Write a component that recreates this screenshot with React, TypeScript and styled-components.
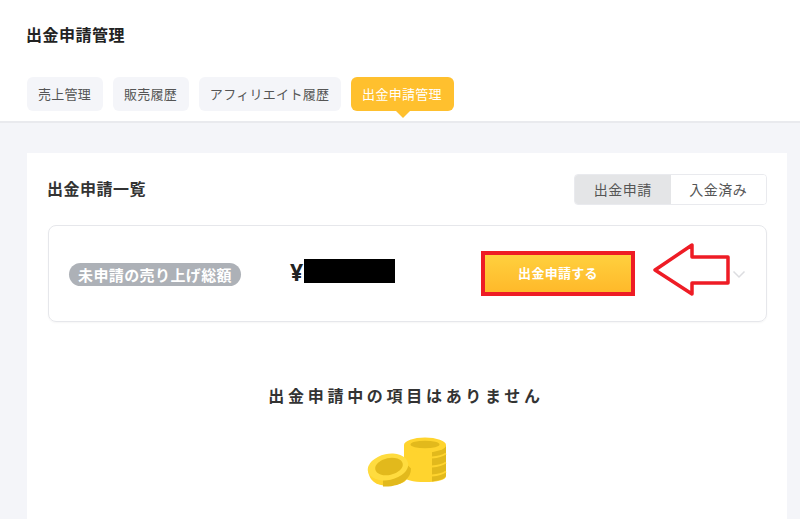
import styled, { createGlobalStyle } from 'styled-components';

const GlobalStyle = createGlobalStyle`
  html, body {
    margin: 0;
    padding: 0;
    height: 519px;
    overflow: hidden;
    background: #f4f5f9;
    font-family: "Noto Sans CJK JP", "Noto Sans", sans-serif;
    color: #333;
  }
  * {
    box-sizing: border-box;
  }
`;

const Page = styled.div`
  position: relative;
  width: 800px;
  height: 519px;
  overflow: hidden;
`;

const Header = styled.header`
  height: 123px;
  padding: 22px 27px 0;
  background: #fff;
  border-bottom: 2px solid #e9eaee;
`;

const PageTitle = styled.h1`
  margin: 0 0 31px -1px;
  height: 24px;
  font-size: 16px;
  line-height: 24px;
  font-weight: 700;
  letter-spacing: 0.5px;
  color: #222;
`;

const Tabs = styled.nav`
  display: flex;
  gap: 10px;
`;

const Tab = styled.div<{ $active?: boolean }>`
  position: relative;
  height: 34px;
  padding: 0 11.9px 0 10.9px;
  border-radius: 6px;
  font-size: 13px;
  line-height: 34px;
  letter-spacing: 0.3px;
  background: ${(p) => (p.$active ? '#ffc02e' : '#f4f5f9')};
  color: ${(p) => (p.$active ? '#fff' : '#555')};

  ${(p) =>
    p.$active &&
    `
    &::after {
      content: '';
      position: absolute;
      left: 50%;
      bottom: -7px;
      margin-left: -7px;
      border-left: 7px solid transparent;
      border-right: 7px solid transparent;
      border-top: 7px solid #ffc02e;
    }
  `}
`;

const Main = styled.main`
  padding: 30px 13px 0 27px;
`;

const Card = styled.section`
  height: 400px;
  padding: 21px 20px 0 21px;
  background: #fff;
`;

const CardHead = styled.div`
  display: flex;
  align-items: center;
  justify-content: space-between;
  height: 31px;
  margin-bottom: 20px;
`;

const CardTitle = styled.h2`
  margin: -4px 0 0 -1px;
  font-size: 16px;
  line-height: 24px;
  font-weight: 700;
  letter-spacing: 0.5px;
  color: #333;
`;

const Segment = styled.div`
  display: flex;
  width: 193px;
  height: 31px;
  border: 1px solid #e9eaee;
  border-radius: 4px;
  overflow: hidden;
`;

const SegmentItem = styled.div<{ $active?: boolean }>`
  flex: 1;
  text-align: center;
  font-size: 14px;
  line-height: 29px;
  letter-spacing: 0.5px;
  color: #555;
  background: ${(p) => (p.$active ? '#e4e5e7' : '#fff')};
`;

const SummaryBox = styled.div`
  display: flex;
  align-items: center;
  height: 97px;
  padding: 0 20px;
  border: 1px solid #e6e7eb;
  border-radius: 8px;
  box-shadow: 0 1px 2px rgba(0, 0, 0, 0.04);
`;

const Pill = styled.span`
  width: 172px;
  height: 23px;
  margin-top: 2px;
  border-radius: 12px;
  text-align: center;
  background: #adb1b7;
  color: #fff;
  font-size: 15px;
  line-height: 23px;
  font-weight: 700;
  letter-spacing: 0.4px;
`;

const Amount = styled.span`
  width: 191px;
  margin: -3px 0 0 49px;
  font-family: "Noto Sans", sans-serif;
  font-size: 23px;
  font-weight: 700;
  color: #222;
`;

const ApplyButton = styled.button`
  width: 154px;
  height: 45px;
  padding: 0 0 2px;
  border: 4px solid #ee1c25;
  background: linear-gradient(#ffd03e, #ffb92a);
  color: #fff;
  font-family: inherit;
  font-size: 13px;
  font-weight: 700;
  letter-spacing: 0.3px;
`;

const Empty = styled.div`
  display: flex;
  flex-direction: column;
  align-items: center;
  padding-top: 61px;
`;

const EmptyText = styled.p`
  margin: 0 0 30px -3px;
  font-size: 16px;
  line-height: 24px;
  font-weight: 700;
  letter-spacing: 3.7px;
  color: #333;
`;

const Redaction = styled.div`
  position: absolute;
  left: 304px;
  top: 259px;
  width: 91px;
  height: 24px;
  background: #000;
`;

const Callout = styled.svg`
  position: absolute;
  left: 650px;
  top: 240px;
`;

const Chevron = styled.svg`
  position: absolute;
  left: 732px;
  top: 270px;
`;

const CoinIcon = styled.svg`
  margin-left: -2px;
`;

function Coins() {
  return (
    <CoinIcon width="80" height="50" viewBox="0 0 80 50">
      <path d="M37 8v31c0 4 9 6 21 6s21-2 21-6V8z" fill="#ffd42e" />
      <path d="M65 44.500c8-1 14-3 14-6V8c0 3-6 5-14 6z" fill="#e2b91c" />
      <path d="M65 20.500c7-.5 11-2 14-4M65 29.500c7-.5 11-2 14-4M65 38.500c7-.5 11-2 14-4" fill="none" stroke="#ffd42e" strokeWidth="2" />
      <ellipse cx="58" cy="8" rx="21" ry="7.500" fill="#ffd42e" />
      <ellipse cx="58" cy="7.500" rx="14.500" ry="3.800" fill="#e2b91c" />
      <path d="M1 32c0 5 2 10 6 13 6 5 20 5 30 0 4-3 7-8 7-13L40 24 6 26z" fill="#ffd42e" />
      <path d="M16 49.500c9 .5 18-2 22-6 4-3 6-7 6-12l-3-3c-3 7-13 12-25 14z" fill="#e2b91c" />
      <ellipse cx="21" cy="30" rx="20.500" ry="13" transform="rotate(-12 21 30)" fill="#ffdc3f" />
      <ellipse cx="22" cy="29.500" rx="14" ry="8.500" transform="rotate(-12 22 29.500)" fill="#e2b91c" />
    </CoinIcon>
  );
}

export default function App() {
  return (
    <Page>
      <GlobalStyle />
      <Header>
        <PageTitle>出金申請管理</PageTitle>
        <Tabs>
          <Tab>売上管理</Tab>
          <Tab>販売履歴</Tab>
          <Tab>アフィリエイト履歴</Tab>
          <Tab $active>出金申請管理</Tab>
        </Tabs>
      </Header>
      <Main>
        <Card>
          <CardHead>
            <CardTitle>出金申請一覧</CardTitle>
            <Segment>
              <SegmentItem $active>出金申請</SegmentItem>
              <SegmentItem>入金済み</SegmentItem>
            </Segment>
          </CardHead>
          <SummaryBox>
            <Pill>未申請の売り上げ総額</Pill>
            <Amount>¥</Amount>
            <ApplyButton>出金申請する</ApplyButton>
          </SummaryBox>
          <Empty>
            <EmptyText>出金申請中の項目はありません</EmptyText>
            <Coins />
          </Empty>
        </Card>
      </Main>
      <Redaction />
      <Chevron width="14" height="10" viewBox="0 0 14 10">
        <path d="M1.500 1.500L7 7l5.500-5.500" fill="none" stroke="#dcdde0" strokeWidth="1.500" />
      </Chevron>
      <Callout width="84" height="60" viewBox="0 0 84 60">
        <path d="M5 30L42 5v12h36v26H42v11z" fill="#fff" stroke="#ee1c25" strokeWidth="3.500" strokeLinejoin="round" />
      </Callout>
    </Page>
  );
}
